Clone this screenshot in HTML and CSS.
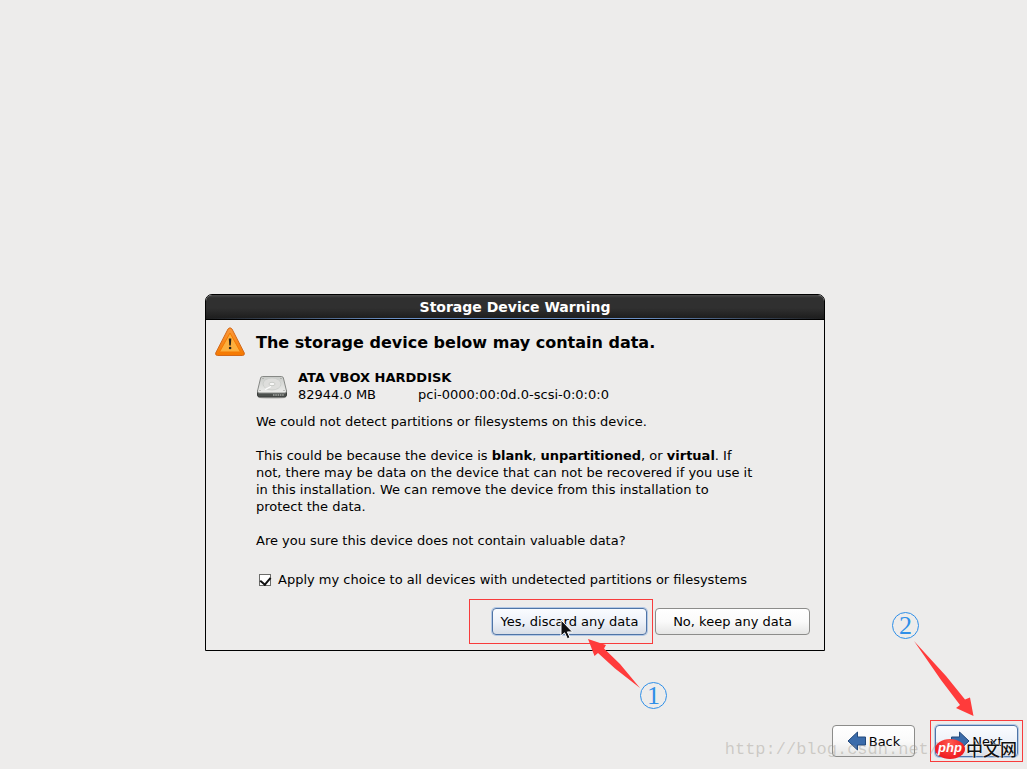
FILE: index.html
```
<!DOCTYPE html>
<html lang="en">
<head>
  <meta charset="UTF-8">
  <meta name="viewport" content="width=device-width, initial-scale=1.0">
  <title>Storage Device Warning</title>
  <link rel="stylesheet" href="styles.css">
</head>
<body>
  <main>
    <section class="dialog" role="dialog" aria-labelledby="dialog-title">
      <h1 id="dialog-title" class="title-bar">Storage Device Warning</h1>

      <div class="dialog-body">
        <svg class="warning-icon" viewBox="0 0 30 30" aria-hidden="true">
          <defs>
            <linearGradient id="warn" x1="0" y1="0" x2="0" y2="1">
              <stop offset="0" stop-color="#fb9a3c"/>
              <stop offset="1" stop-color="#f57900"/>
            </linearGradient>
          </defs>
          <path d="M13 2 Q15 -.5 17 2 L29.300 26 Q29.800 28.500 27.500 28.500 H2.500 Q.2 28.500 .7 26 Z" fill="url(#warn)" stroke="#d2691a" stroke-width="1" stroke-linejoin="round"/>
          <path d="M15 6 25.500 25 H4.500 Z" fill="#fcaf3e" stroke="#f57900" stroke-width="1"/>
          <path d="M13.800 11.500 h2.500 l-.5 7 h-1.500 Z" fill="#2a2118"/>
          <circle cx="15.100" cy="21" r="1.300" fill="#2a2118"/>
        </svg>

        <div class="content">
          <h2>The storage device below may contain data.</h2>

          <div class="device">
            <svg class="disk-icon" viewBox="0 0 32 24" aria-hidden="true">
              <defs>
                <linearGradient id="disk" x1="0" y1="0" x2="0" y2="1">
                  <stop offset="0" stop-color="#c9cbc8"/>
                  <stop offset="1" stop-color="#eeeeec"/>
                </linearGradient>
              </defs>
              <ellipse cx="16" cy="22.500" rx="14" ry="1.300" fill="#c4c4c2"/>
              <path d="M1.500 15.500 H30.500 V20 Q30.500 22 28.500 22 H3.500 Q1.500 22 1.500 20 Z" fill="#4b4f4c" stroke="#3a3d3a"/>
              <path d="M6.500 1.500 H25.500 Q27 1.500 27.400 3 L30.500 16 Q30.500 18 29 18 H3 Q1.500 18 1.500 16 L4.600 3 Q5 1.500 6.500 1.500 Z" fill="url(#disk)" stroke="#868885"/>
              <ellipse cx="16" cy="9" rx="9" ry="6" fill="#dededc" stroke="#c6c8c5" stroke-width=".7"/>
              <ellipse cx="16" cy="9" rx="3" ry="1.700" fill="#f7f7f6" stroke="#b9bbb8" stroke-width=".7"/>
              <path d="M9 14.500 L15 11.500" stroke="#fff" stroke-width="1.200"/>
              <path d="M17 20 H28" stroke="#a5a8a4" stroke-width="1.400" stroke-dasharray="1.500 .8"/>
              <g fill="#8d8f8c"><circle cx="7" cy="3.500" r=".6"/><circle cx="25" cy="3.500" r=".6"/><circle cx="4" cy="15.500" r=".6"/><circle cx="28" cy="15.500" r=".6"/></g>
            </svg>
            <div>
              <strong>ATA VBOX HARDDISK</strong>
              <div class="device-info"><span>82944.0 MB</span><span>pci-0000:00:0d.0-scsi-0:0:0:0</span></div>
            </div>
          </div>

          <p>We could not detect partitions or filesystems on this device.</p>
          <p>This could be because the device is <b>blank</b>, <b>unpartitioned</b>, or <b>virtual</b>. If not, there may be data on the device that can not be recovered if you use it in this installation. We can remove the device from this installation to protect the data.</p>
          <p>Are you sure this device does not contain valuable data?</p>

          <label class="apply-all">
            <input type="checkbox" checked>
            Apply my choice to all devices with undetected partitions or filesystems
          </label>
        </div>
      </div>

      <div class="dialog-buttons">
        <span class="marked mark-yes"><button class="btn focused">Yes, discard any data</button></span>
        <button class="btn">No, keep any data</button>
      </div>

      <svg class="cursor" viewBox="0 0 14 22" aria-hidden="true">
        <path d="M1 1 V17 L4.600 13.800 L7.400 19.800 L10 18.600 L7.400 12.900 H12.500 Z" fill="#111" stroke="#fff" stroke-width="1"/>
      </svg>
      <svg class="arrow arrow-one" viewBox="0 0 54 51" aria-hidden="true">
        <path d="M0 0 18 6 16 9.500 32 25 52 49 27 29.500 10 14 6.500 17 Z" fill="#ff3b3b"/>
      </svg>
      <span class="step step-one">1</span>
    </section>
  </main>

  <footer>
    <button class="btn nav-btn">
      <svg viewBox="0 0 20 20" aria-hidden="true"><path d="M1 10 10.500 1 V6 H18.500 V14 H10.500 V19 Z" fill="#3b6cab" stroke="#23497c"/></svg>
      Back
    </button>
    <span class="marked mark-next">
      <button class="btn nav-btn focused">
        <svg viewBox="0 0 20 20" aria-hidden="true"><path d="M19 10 9.500 1 V6 H1.500 V14 H9.500 V19 Z" fill="#3b6cab" stroke="#23497c"/></svg>
        Next
      </button>
    </span>

    <span class="watermark">http://blog.csdn.net/</span>
    <div class="logo"><span class="logo-php">php</span><span class="logo-cn">中文网</span></div>
    <svg class="arrow arrow-two" viewBox="0 0 62 76" aria-hidden="true">
      <path d="M1 0 33 35 52 58.500 57 56.500 60.500 75 43 67 47 64 28 39 Z" fill="#ff3b3b"/>
    </svg>
    <span class="step step-two">2</span>
  </footer>
</body>
</html>
```
FILE: styles.css
```
:root {
  --bg: #edeceb;
  --mark: #f83c3c;
  --step: #2f8fe8;
}

* {
  box-sizing: border-box;
}

body {
  margin: 0;
  min-height: 100vh;
  display: flex;
  flex-direction: column;
  background: var(--bg);
  color: #000;
  font: 13px/17px "DejaVu Sans", sans-serif;
}

main {
  flex: 1;
  padding: 294px 202px 0 205px;
}

.dialog {
  position: relative;
  border: 1px solid #000;
  border-radius: 7px 7px 0 0;
}

.title-bar {
  margin: 0;
  height: 25px;
  border-bottom: 1px solid #000;
  border-radius: 6px 6px 0 0;
  background:
    linear-gradient(90deg, transparent, #6a8fc4 30%, #6a8fc4 70%, transparent) bottom / 100% 1px no-repeat,
    linear-gradient(#4a4a4a, #303030 3px, #303030 13px, #1c1c1c);
  color: #fff;
  font: bold 14px/25px "DejaVu Sans", sans-serif;
  text-align: center;
}

.dialog-body {
  display: flex;
  gap: 11px;
  padding: 7px 70px 0 9px;
}

.warning-icon {
  width: 30px;
  height: 30px;
  flex: none;
}

h2 {
  margin: 6px 0 16px;
  font: bold 16px/20px "DejaVu Sans", sans-serif;
}

.device {
  display: flex;
  gap: 10px;
  margin-bottom: 10px;
}

.device strong {
  display: block;
}

.disk-icon {
  width: 32px;
  height: 24px;
  margin-top: 6px;
}

.device-info {
  display: flex;
}

.device-info span:first-child {
  width: 120px;
}

p {
  margin: 0 0 17px;
}

.apply-all {
  display: flex;
  align-items: center;
  gap: 7px;
  padding: 5px 0 0 3px;
  white-space: nowrap;
}

.apply-all input {
  appearance: none;
  width: 12px;
  height: 12px;
  margin: 0;
  border: 1px solid #6c6c6a;
  background: #fff;
  display: flex;
  justify-content: center;
}

.apply-all input:checked::before {
  content: "";
  width: 5px;
  height: 8px;
  border: solid #111;
  border-width: 0 2px 2px 0;
  transform: rotate(40deg);
}

.dialog-buttons {
  display: flex;
  justify-content: flex-end;
  align-items: center;
  gap: 2px;
  padding: 11px 14px 6px;
}

.btn {
  min-width: 155px;
  height: 27px;
  padding: 0 7px;
  border: 1px solid #8c8c8a;
  border-radius: 4px;
  background: linear-gradient(#fff, #fafafa 50%, #e6e6e5);
  color: #000;
  font: inherit;
}

.btn.focused {
  border-color: #4f74a6;
  background: linear-gradient(#fafcff, #eef2f9 50%, #d9dee6);
  box-shadow: 0 0 0 1px #b4c9e6;
}

.marked {
  display: flex;
  border: 1px solid var(--mark);
}

.mark-yes {
  padding: 8px 5px 8px 22px;
}

.nav-btn {
  display: flex;
  align-items: center;
  justify-content: center;
  gap: 2px;
  min-width: 83px;
  height: 32px;
}

.nav-btn svg {
  width: 20px;
  height: 20px;
}

footer {
  position: relative;
  display: flex;
  justify-content: flex-end;
  align-items: center;
  gap: 15px;
  padding: 0 4px 7px;
}

.mark-next {
  padding: 4px;
}

/* annotations lying over the window */
.cursor,
.arrow,
.step,
.watermark,
.logo {
  position: absolute;
}

.cursor {
  left: 354px;
  top: 324px;
  width: 14px;
  height: 22px;
}

.arrow-one {
  left: 382px;
  top: 344px;
  width: 54px;
  height: 51px;
}

.arrow-two {
  right: 52px;
  bottom: 52px;
  width: 62px;
  height: 76px;
}

.step {
  width: 27px;
  height: 27px;
  border: 1px solid var(--step);
  border-radius: 50%;
  color: var(--step);
  font: 26px/25px "Liberation Serif", serif;
  text-align: center;
}

.step-one {
  left: 434px;
  top: 387px;
}

.step-two {
  right: 108px;
  bottom: 130px;
}

.watermark {
  right: 88px;
  bottom: 8px;
  color: rgba(150, 145, 135, 0.38);
  font: 17px/22px "Liberation Mono", monospace;
}

.logo {
  right: 10px;
  bottom: 10px;
  display: flex;
  align-items: center;
}

.logo-php {
  width: 30px;
  height: 20px;
  border-radius: 50%;
  background: radial-gradient(at 50% 20%, #ff5a50, #f01c22 70%);
  color: #fff;
  font: italic bold 13px/17px "Liberation Sans", sans-serif;
  text-align: center;
}

.logo-cn {
  margin-left: 1px;
  color: #111;
  font: 500 17px/20px "Noto Sans CJK SC", sans-serif;
  text-shadow: 0 0 1px #fff, 0 0 2px #fff;
}
```
